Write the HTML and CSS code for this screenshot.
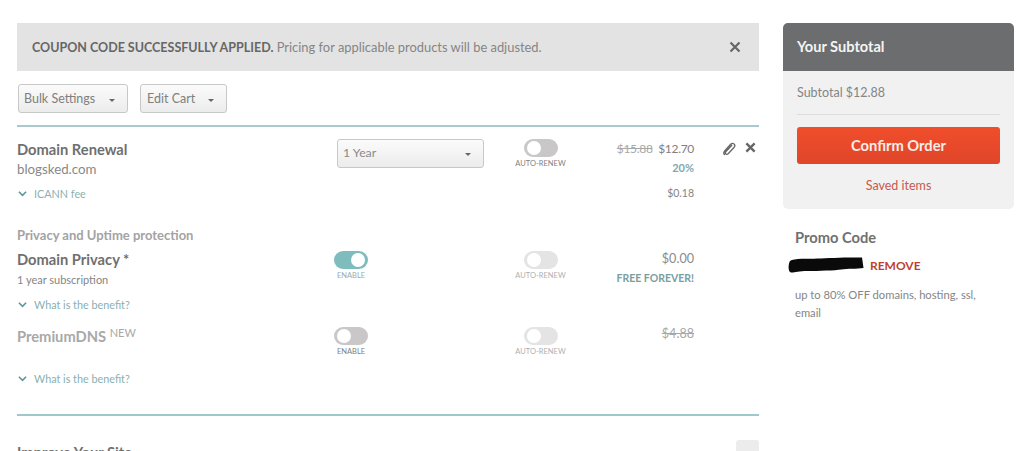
FILE: index.html
```html
<!DOCTYPE html>
<html lang="en">

<head>
  <meta charset="UTF-8" />
  <title>Shopping Cart</title>
  <link rel="stylesheet" href="styles.css">
</head>

<body>
  <div class="page">
    <div class="cart">
      <div class="alert">
        <p><strong>COUPON CODE SUCCESSFULLY APPLIED.</strong> Pricing for applicable products will be adjusted.</p>
        <svg class="close-icon" viewBox="0 0 12 12"><path d="M1.5 1.5l9 9M10.5 1.5l-9 9" /></svg>
      </div>

      <div class="toolbar">
        <button class="btn btn-bulk">Bulk Settings <span class="caret"></span></button>
        <button class="btn btn-edit">Edit Cart <span class="caret"></span></button>
      </div>

      <div class="row row-renewal">
        <div class="info">
          <h3 class="item-title">Domain Renewal</h3>
          <div class="domain">blogsked.com</div>
        </div>
        <div class="term">
          <div class="select">1 Year <span class="caret"></span></div>
        </div>
        <div class="switch-col">
          <span class="switch"></span>
          <span class="switch-label">AUTO-RENEW</span>
        </div>
        <div class="price">
          <div class="tight"><s>$15.88</s>&nbsp; $12.70</div>
          <div class="promo-pct">20%</div>
        </div>
        <div class="actions">
          <svg class="clip-icon" viewBox="0 0 14 15"><path d="M9.800 2.600L3.200 9.600c-.9 1-.9 2-.1 2.700s1.800.5 2.700-.4l6-6.600c1.300-1.500 1.200-2.900.1-3.800s-2.600-.7-3.900.7L2 8.800C.7 10.300.7 12.300 1.900 13.400" /></svg>
          <svg class="close-icon small" viewBox="0 0 12 12"><path d="M1.5 1.5l9 9M10.500 1.500l-9 9" /></svg>
        </div>
      </div>
      <div class="fee-row">
        <a class="more"><svg class="chev" viewBox="0 0 10 7"><path d="M1 1.500l4 4 4-4" /></svg>ICANN fee</a>
        <span class="fee">$0.18</span>
      </div>

      <h4 class="section-title">Privacy and Uptime protection</h4>

      <div class="row row-privacy">
        <div class="info">
          <h3 class="item-title">Domain Privacy *</h3>
          <div class="sub">1 year subscription</div>
        </div>
        <div class="term">
          <div class="switch-col left">
            <span class="switch on"></span>
            <span class="switch-label">ENABLE</span>
          </div>
        </div>
        <div class="switch-col faded">
          <span class="switch"></span>
          <span class="switch-label">AUTO-RENEW</span>
        </div>
        <div class="price">
          <div class="zero">$0.00</div>
          <div class="free">FREE FOREVER!</div>
        </div>
      </div>
      <a class="more benefit"><svg class="chev" viewBox="0 0 10 7"><path d="M1 1.500l4 4 4-4" /></svg>What is the benefit?</a>

      <div class="row row-dns">
        <div class="info">
          <h3 class="item-title muted">PremiumDNS <sup>NEW</sup></h3>
        </div>
        <div class="term">
          <div class="switch-col left">
            <span class="switch"></span>
            <span class="switch-label">ENABLE</span>
          </div>
        </div>
        <div class="switch-col faded">
          <span class="switch"></span>
          <span class="switch-label">AUTO-RENEW</span>
        </div>
        <div class="price">
          <div class="zero"><s>$4.88</s></div>
        </div>
      </div>
      <a class="more benefit"><svg class="chev" viewBox="0 0 10 7"><path d="M1 1.500l4 4 4-4" /></svg>What is the benefit?</a>

      <div class="next">
        <h3 class="item-title dark">Improve Your Site</h3>
        <span class="collapse-box"></span>
      </div>
    </div>

    <aside class="side">
      <div class="summary">
        <div class="summary-head">Your Subtotal</div>
        <div class="summary-body">
          <div class="subtotal">Subtotal $12.88</div>
          <button class="confirm">Confirm Order</button>
          <a class="saved">Saved items</a>
        </div>
      </div>
      <div class="promo">
        <h3 class="promo-title">Promo Code</h3>
        <div class="promo-line">
          <svg class="redacted" viewBox="0 0 78 18"><path d="M2 5C6 2 20 3 30 2.500S62 1 75 1.500L76.500 12C70 13 60 12.500 54 13.500S30 15 20 15 6 17 3 16.500 0 9 2 5z" /></svg>
          <a class="remove">REMOVE</a>
        </div>
        <p class="promo-text">up to 80% OFF domains, hosting, ssl, email</p>
      </div>
    </aside>
  </div>
</body>

</html>
```

FILE: styles.css
```css
html,
body {
  margin: 0;
  height: 451px;
  overflow: hidden;
  background: #fff;
}

body {
  font-family: 'Lato', 'Open Sans', sans-serif;
  color: #6f6f6f;
}

h3,
h4,
p {
  margin: 0;
}

.page {
  display: flex;
  align-items: flex-start;
  gap: 24px;
  padding: 23px 10px 0 17px;
}

.cart {
  width: 742px;
  flex: none;
}

.side {
  width: 231px;
  flex: none;
}

/* alert */
.alert {
  display: flex;
  justify-content: space-between;
  align-items: center;
  height: 48px;
  padding: 0 18px 0 15px;
  box-sizing: border-box;
  background: #e3e3e3;
  font-size: 12.9px;
  color: #858585;
}

.alert strong {
  font-size: 12.5px;
  color: #666;
}

.close-icon {
  width: 12px;
  height: 12px;
  fill: none;
  stroke: #666;
  stroke-width: 2.2;
}

.close-icon.small {
  width: 11px;
  height: 11px;
  stroke-width: 2.6;
}

/* toolbar */
.toolbar {
  display: flex;
  gap: 12px;
  padding: 13px 0 12px 1px;
  border-bottom: 2px solid #a9c9cc;
}

.btn {
  display: flex;
  align-items: center;
  justify-content: space-between;
  height: 29px;
  padding: 0 7px 0 5px;
  border: 1px solid #c8c8c8;
  border-radius: 3px;
  background: linear-gradient(#fbfbfb, #ececec);
  font-family: inherit;
  font-size: 12.5px;
  color: #808080;
}

.btn-bulk {
  width: 110px;
}

.btn-edit {
  width: 87px;
  padding-left: 6px;
}

.caret {
  display: inline-block;
  width: 0;
  height: 0;
  margin: 3px 5px 0 0;
  border-left: 3px solid transparent;
  border-right: 3px solid transparent;
  border-top: 3px solid #666;
}

/* rows */
.row {
  display: grid;
  grid-template-columns: 320px 146px 115px 96px 65px;
}

.row-renewal {
  height: 46px;
  padding-top: 11px;
}

.row-renewal .term,
.row-renewal .switch-col,
.row-renewal .actions {
  margin-top: 1px;
}

.row-renewal .price {
  margin-top: 2px;
}

.row-privacy {
  height: 47px;
  padding-top: 4px;
}

.row-dns {
  height: 44px;
  padding-top: 12px;
}

.row-privacy .switch-col {
  margin-top: 3px;
}

.row-dns .switch-col {
  margin-top: 2px;
}

.row-privacy .price {
  margin-top: 2px;
}

.row-dns .price {
  margin-top: 0;
}

.item-title {
  font-size: 14.7px;
  line-height: 22px;
  font-weight: 700;
  color: #6f6f6f;
}

.item-title.muted {
  color: #a8a8a8;
}

.item-title.muted sup {
  font-size: 11px;
  font-weight: 400;
  line-height: 0;
  vertical-align: 5px;
}

.domain {
  font-size: 13.3px;
  line-height: 18px;
  color: #888;
}

.sub {
  font-size: 11px;
  line-height: 20px;
  color: #858585;
}

.select {
  display: flex;
  justify-content: space-between;
  align-items: center;
  box-sizing: border-box;
  width: 147px;
  height: 29px;
  padding: 0 7px 2px 5px;
  border: 1px solid #c8c8c8;
  border-radius: 3px;
  background: linear-gradient(#fbfbfb, #ececec);
  font-size: 12.3px;
  color: #8a8a8a;
}

.term .switch-col {
  width: 34px;
  margin-left: -3px;
}

.switch-col {
  display: flex;
  flex-direction: column;
  align-items: center;
}

.switch {
  position: relative;
  display: block;
  width: 34px;
  height: 18px;
  border-radius: 9px;
  background: #c9c7c7;
}

.switch::after {
  content: '';
  position: absolute;
  top: 2px;
  left: 3px;
  width: 14px;
  height: 14px;
  border-radius: 50%;
  background: #fff;
}

.switch.on {
  background: #7fbcbd;
}

.switch.on::after {
  left: 17px;
}

.switch-label {
  margin-top: 2px;
  font-size: 7.5px;
  line-height: 10px;
  white-space: nowrap;
  color: #808080;
}

.term .switch-label {
  color: #9aabab;
}

.row-dns .term .switch-label {
  color: #808080;
}

.faded .switch {
  background: #e4e4e4;
}

.faded .switch-label {
  color: #b0b0b0;
}

.price {
  text-align: right;
  font-size: 12px;
  line-height: 18px;
  white-space: nowrap;
  color: #808080;
}

.tight {
  letter-spacing: -0.3px;
}

.price s {
  color: #a8a8a8;
}

.promo-pct {
  margin-top: 1px;
  font-size: 11px;
  font-weight: 700;
  color: #7fa9ab;
}

.zero {
  font-size: 12.6px;
  line-height: 18px;
  color: #8a8a8a;
}

.free {
  font-size: 10.5px;
  line-height: 20px;
  font-weight: 700;
  white-space: nowrap;
  color: #7a9e9f;
}

.actions {
  display: flex;
  align-items: flex-start;
  gap: 9px;
  padding: 3px 0 0 29px;
}

.clip-icon {
  width: 13px;
  height: 15px;
  fill: none;
  stroke: #6a6a6a;
  stroke-width: 1.5;
}

.fee-row {
  display: flex;
  justify-content: space-between;
  align-items: center;
  width: 677px;
  height: 18px;
}

.fee {
  font-size: 10.5px;
  color: #858585;
}

.more {
  display: flex;
  align-items: center;
  font-size: 10.8px;
  color: #8ab0b1;
}

.benefit {
  height: 18px;
}

.chev {
  width: 9px;
  height: 7px;
  margin: 0 7px 0 1px;
  fill: none;
  stroke: #5f9799;
  stroke-width: 1.8;
}

.section-title {
  margin-top: 24px;
  font-size: 13px;
  line-height: 18px;
  font-weight: 700;
  color: #a3a3a3;
}

/* next section */
.next {
  display: flex;
  justify-content: space-between;
  height: 60px;
  margin-top: 27px;
  padding-top: 26px;
  border-top: 2px solid #a0c8c9;
}

.item-title.dark {
  line-height: 18px;
  margin-top: 1px;
}

.collapse-box {
  width: 23px;
  height: 30px;
  margin-top: -2px;
  border-radius: 3px;
  background: #ececec;
}

/* sidebar */
.summary {
  border-radius: 5px;
  overflow: hidden;
  background: #f1f1f1;
}

.summary-head {
  height: 48px;
  padding-left: 14px;
  background: #6c6d6f;
  font-size: 14.6px;
  line-height: 48px;
  font-weight: 700;
  color: #f4f4f4;
}

.summary-body {
  display: flex;
  flex-direction: column;
  height: 138px;
  padding: 0 14px;
}

.subtotal {
  height: 43px;
  border-bottom: 1px solid #dcdcdc;
  font-size: 12.5px;
  line-height: 43px;
  color: #858585;
}

.confirm {
  height: 37px;
  margin-top: 12px;
  padding: 0 0 2px;
  border: 0;
  border-radius: 3px;
  background: linear-gradient(#f04e2b, #df4529);
  font-family: inherit;
  font-size: 14.7px;
  font-weight: 700;
  color: #f8ece8;
}

.saved {
  margin-top: 14px;
  text-align: center;
  font-size: 12.5px;
  line-height: 16px;
  color: #c75a4c;
}

.promo {
  padding: 19px 0 0 5px;
}

.promo-title {
  padding-left: 7px;
  font-size: 14.7px;
  line-height: 18px;
  font-weight: 700;
  color: #707070;
}

.promo-line {
  display: flex;
  align-items: center;
  gap: 5px;
  margin-top: 10px;
  height: 18px;
}

.redacted {
  width: 77px;
  height: 18px;
  fill: #0a0a0a;
}

.remove {
  font-size: 12px;
  font-weight: 700;
  color: #bf3f30;
}

.promo-text {
  width: 192px;
  margin-top: 12px;
  padding-left: 7px;
  font-size: 11.2px;
  line-height: 18px;
  color: #858585;
}
```
